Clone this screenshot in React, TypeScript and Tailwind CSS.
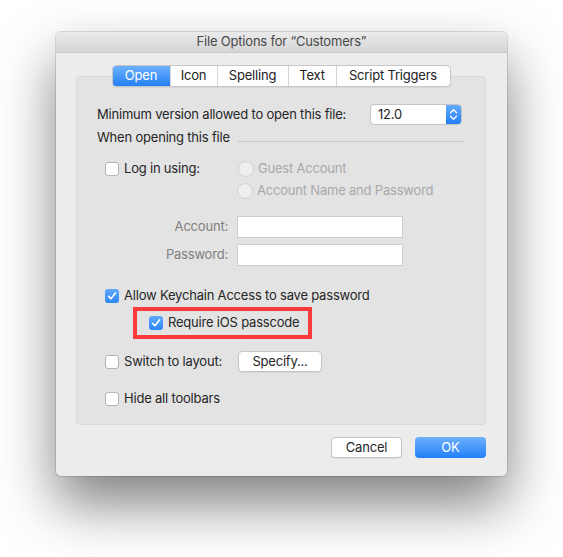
import React from 'react';

const font = { fontFamily: 'Inter, "Noto Sans", sans-serif' };

const Checkbox = ({checked = false}: {checked?: boolean}) => {
  if (checked) {
    return (
      <span className="flex h-[14px] w-[14px] shrink-0 items-center justify-center rounded-[3px] bg-gradient-to-b from-[#5fa8fb] to-[#2a88f7]">
        <svg width="10" height="10" viewBox="0 0 10 10">
          <path d="M1.6 5.4 L4 7.8 L8.6 1.8" fill="none" stroke="white" strokeWidth="1.6" strokeLinecap="round" strokeLinejoin="round" />
        </svg>
      </span>
    );
  }
  return <span className="h-[14px] w-[14px] shrink-0 rounded-[3px] border border-[#b4b4b4] bg-white" />;
};

const Radio = ({label}: {label: string}) => (
  <div className="flex h-[20px] items-center gap-[4px]">
    <span className="h-[16px] w-[16px] rounded-full border border-[#d2d2d2] bg-[#efefef]" />
    <span className="text-[#a9a9a9]">{label}</span>
  </div>
);

const tabs = [
  {name: 'Open', w: 57},
  {name: 'Icon', w: 47},
  {name: 'Spelling', w: 71},
  {name: 'Text', w: 48},
  {name: 'Script Triggers', w: 114},
];

const App = () => {
  return (
    <div className="h-[557px] w-[563px] bg-white pl-[56px] pt-[32px] text-[13px] tracking-[-0.2px] text-[#262626]" style={font}>
      <div className="flex h-[444px] w-[451px] flex-col overflow-hidden rounded-[5px] bg-[#ececec] shadow-[0_0_0_1px_rgba(0,0,0,0.12),0_28px_56px_rgba(0,0,0,0.5)]">
        <div className="flex h-[21px] items-center justify-center border-b border-[#c8c8c8] bg-gradient-to-b from-[#ebebeb] to-[#d5d5d5] text-[#4a4a4a]">
          File Options for “Customers”
        </div>

        <div className="flex flex-1 flex-col px-[20px] pt-[12px]">
          <div className="relative z-10 flex justify-center pr-[1px]">
            <div className="flex h-[22px] overflow-hidden rounded-[4px] border border-[#c6c6c6] bg-white shadow-[0_1px_0_rgba(0,0,0,0.05)]">
              {tabs.map(({name, w}, i) => (
                <div
                  key={name}
                  style={{width: w}}
                  className={
                    i === 0
                      ? 'flex items-center justify-center bg-gradient-to-b from-[#6cb1fb] to-[#1f7ef8] text-white'
                      : 'flex items-center justify-center border-l border-[#d6d6d6] text-[#222]'
                  }
                >
                  {name}
                </div>
              ))}
            </div>
          </div>

          <div className="-mt-[11px] flex h-[349px] w-[410px] flex-col rounded-[4px] border border-[#d9d9d9] bg-[#e3e3e3] pl-[20px]">
            <div className="mt-[27px] flex h-[21px] items-center justify-between pr-[23px]">
              <span>Minimum version allowed to open this file:</span>
              <div className="flex h-[21px] w-[92px] overflow-hidden rounded-[4px] border border-[#c4c4c4] bg-white">
                <span className="flex flex-1 items-center pl-[7px] text-[#222]">12.0</span>
                <span className="flex w-[15px] items-center justify-center bg-gradient-to-b from-[#63abfb] to-[#217ff7]">
                  <svg width="9" height="13" viewBox="0 0 9 13">
                    <path d="M1.5 4.8 L4.5 1.8 L7.5 4.8 M1.5 8.2 L4.5 11.2 L7.5 8.2" fill="none" stroke="white" strokeWidth="1.3" strokeLinecap="round" strokeLinejoin="round" />
                  </svg>
                </span>
              </div>
            </div>

            <div className="mt-[3px] flex h-[20px] items-center gap-[8px] pr-[21px]">
              <span>When opening this file</span>
              <span className="mt-[7px] h-px flex-1 bg-[#c9c9c9]" />
            </div>

            <div className="mt-[11px] flex h-[20px] items-center pl-[8px]">
              <Checkbox />
              <span className="ml-[5px] w-[114px]">Log in using:</span>
              <Radio label="Guest Account" />
            </div>
            <div className="mt-[2px] flex h-[20px] items-center pl-[140px]">
              <Radio label="Account Name and Password" />
            </div>

            <div className="mt-[15px] flex h-[22px] items-center">
              <span className="w-[131px] text-right text-[#808080]">Account:</span>
              <span className="ml-[9px] h-[22px] w-[166px] border border-[#cfcfcf] bg-white" />
            </div>
            <div className="mt-[6px] flex h-[22px] items-center">
              <span className="w-[131px] text-right text-[#808080]">Password:</span>
              <span className="ml-[9px] h-[22px] w-[166px] border border-[#cfcfcf] bg-white" />
            </div>

            <div className="mt-[20px] flex h-[20px] items-center gap-[5px] pl-[8px]">
              <Checkbox checked />
              <span>Allow Keychain Access to save password</span>
            </div>

            <div className="mt-[1px] ml-[36px] flex h-[32px] w-[179px] items-center gap-[5px] border-[4px] border-[#fb3b3b] pl-[12px]">
              <Checkbox checked />
              <span>Require iOS passcode</span>
            </div>

            <div className="mt-[12px] flex h-[21px] items-center pl-[8px]">
              <Checkbox />
              <span className="ml-[5px] w-[114px]">Switch to layout:</span>
              <span className="flex h-[21px] w-[84px] items-center justify-center rounded-[4px] border border-[#c4c4c4] bg-white shadow-[0_1px_0_rgba(0,0,0,0.06)]">
                Specify...
              </span>
            </div>

            <div className="mt-[17px] flex h-[20px] items-center gap-[5px] pl-[8px]">
              <Checkbox />
              <span>Hide all toolbars</span>
            </div>
          </div>

          <div className="mt-[12px] flex justify-end gap-[13px] pr-[1px]">
            <span className="flex h-[21px] w-[71px] items-center justify-center rounded-[4px] border border-[#c4c4c4] bg-white shadow-[0_1px_0_rgba(0,0,0,0.06)]">
              Cancel
            </span>
            <span className="flex h-[21px] w-[71px] items-center justify-center rounded-[4px] bg-gradient-to-b from-[#6cb1fb] to-[#1f7ef8] text-white">
              OK
            </span>
          </div>
        </div>
      </div>
    </div>
  );
};

export default App;
